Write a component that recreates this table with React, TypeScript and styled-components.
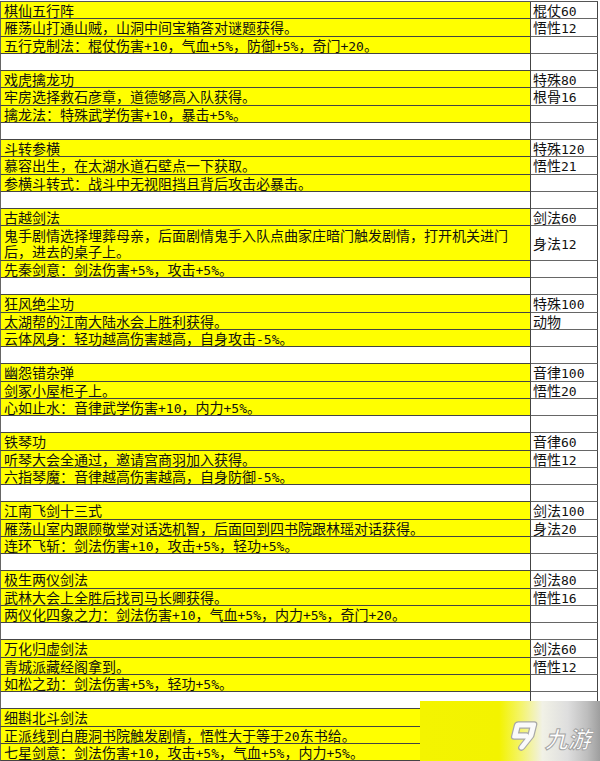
import * as React from 'react';
import styled, { createGlobalStyle } from 'styled-components';

const ROW = 17.25;

const GlobalStyle = createGlobalStyle`
  html, body {
    margin: 0;
    padding: 0;
    background: #fff;
  }
  body {
    font-family: "Noto Sans CJK SC", sans-serif;
  }
`;

const Page = styled.div`
  position: relative;
  width: 600px;
  height: 761px;
  overflow: hidden;
  box-sizing: border-box;
  padding-top: 1px;
  background: #fff;
`;

const Sheet = styled.div`
  width: 598px;
  border-top: 1px solid #555;
  display: flex;
  flex-direction: column;
`;

const Row = styled.div<{ $lines: number }>`
  display: grid;
  grid-template-columns: 531px 67px;
  height: ${(p) => p.$lines * ROW}px;
  flex: none;
`;

const Cell = styled.div`
  box-sizing: border-box;
  display: flex;
  flex-direction: column;
  justify-content: center;
  border-bottom: 1px solid #444;
  border-right: 1px solid #444;
  font-family: "Noto Sans CJK SC", sans-serif;
  font-size: 14px;
  line-height: 16px;
  color: #111;
  white-space: nowrap;
`;

const MainCell = styled(Cell)<{ $fill: boolean }>`
  background: ${(p) => (p.$fill ? '#ffff00' : '#fff')};
  border-left: 1px solid #666;
  padding-left: 3px;
`;

const ReqCell = styled(Cell)`
  background: #fff;
  border-bottom-color: #666;
  padding-left: 2px;
`;

const Line = styled.span`
  display: block;
  height: 16px;
  line-height: 16px;
`;

const Half = styled.span`
  font-family: "DejaVu Sans Mono", monospace;
  font-size: 13px;
  line-height: 16px;
`;

const Watermark = styled.div`
  position: absolute;
  left: 420px;
  top: 701px;
  width: 180px;
  height: 60px;
  display: flex;
  align-items: center;
  gap: 9px;
  box-sizing: border-box;
  padding: 8px 0 0 86px;
  background: linear-gradient(
    90deg,
    #f4f400 0%,
    #f3f300 44%,
    #f4f46a 56%,
    #f1f1e6 68%,
    #dedede 82%,
    #bdbdbd 93%,
    #9e9e9e 100%
  );
`;

const Logo = styled.svg`
  width: 32px;
  height: 32px;
  flex: none;
`;

const Brand = styled.span`
  display: inline-block;
  font-family: "Noto Sans CJK SC", sans-serif;
  font-size: 23px;
  font-weight: 700;
  line-height: 23px;
  color: #fff;
  -webkit-text-stroke: 1px #a4a4a4;
  transform: skewX(-14deg);
  margin-top: 6px;
`;

interface Skill {
  title: string;
  source: string[];
  effect: string;
  reqs: string[];
}

const skills: Skill[] = [
  {
    title: '棋仙五行阵',
    source: ['雁荡山打通山贼，山洞中间宝箱答对谜题获得。'],
    effect: '五行克制法：棍仗伤害+10，气血+5%，防御+5%，奇门+20。',
    reqs: ['棍仗60', '悟性12'],
  },
  {
    title: '戏虎擒龙功',
    source: ['牢房选择救石彦章，道德够高入队获得。'],
    effect: '擒龙法：特殊武学伤害+10，暴击+5%。',
    reqs: ['特殊80', '根骨16'],
  },
  {
    title: '斗转参横',
    source: ['慕容出生，在太湖水道石壁点一下获取。'],
    effect: '参横斗转式：战斗中无视阻挡且背后攻击必暴击。',
    reqs: ['特殊120', '悟性21'],
  },
  {
    title: '古越剑法',
    source: [
      '鬼手剧情选择埋葬母亲，后面剧情鬼手入队点曲家庄暗门触发剧情，打开机关进门',
      '后，进去的桌子上。',
    ],
    effect: '先秦剑意：剑法伤害+5%，攻击+5%。',
    reqs: ['剑法60', '身法12'],
  },
  {
    title: '狂风绝尘功',
    source: ['太湖帮的江南大陆水会上胜利获得。'],
    effect: '云体风身：轻功越高伤害越高，自身攻击-5%。',
    reqs: ['特殊100', '动物'],
  },
  {
    title: '幽怨错杂弹',
    source: ['剑冢小屋柜子上。'],
    effect: '心如止水：音律武学伤害+10，内力+5%。',
    reqs: ['音律100', '悟性20'],
  },
  {
    title: '铁琴功',
    source: ['听琴大会全通过，邀请宫商羽加入获得。'],
    effect: '六指琴魔：音律越高伤害越高，自身防御-5%。',
    reqs: ['音律60', '悟性12'],
  },
  {
    title: '江南飞剑十三式',
    source: ['雁荡山室内跟顾敬堂对话选机智，后面回到四书院跟林瑶对话获得。'],
    effect: '连环飞斩：剑法伤害+10，攻击+5%，轻功+5%。',
    reqs: ['剑法100', '身法20'],
  },
  {
    title: '极生两仪剑法',
    source: ['武林大会上全胜后找司马长卿获得。'],
    effect: '两仪化四象之力：剑法伤害+10，气血+5%，内力+5%，奇门+20。',
    reqs: ['剑法80', '悟性16'],
  },
  {
    title: '万化归虚剑法',
    source: ['青城派藏经阁拿到。'],
    effect: '如松之劲：剑法伤害+5%，轻功+5%。',
    reqs: ['剑法60', '悟性12'],
  },
  {
    title: '细斟北斗剑法',
    source: ['正派线到白鹿洞书院触发剧情，悟性大于等于20东书给。'],
    effect: '七星剑意：剑法伤害+10，攻击+5%，气血+5%，内力+5%。',
    reqs: ['', ''],
  },
];

// half-width runs (digits, +, %) are narrower than the CJK glyphs
function Mixed({ text }: { text: string }) {
  const parts = text.split(/([\x20-\x7e]+)/);
  return (
    <>
      {parts.map((p, i) => (i % 2 ? <Half key={i}>{p}</Half> : p))}
    </>
  );
}

function SkillBlock({ skill, last }: { skill: Skill; last: boolean }) {
  return (
    <>
      <Row $lines={1}>
        <MainCell $fill>
          <Line><Mixed text={skill.title} /></Line>
        </MainCell>
        <ReqCell>{skill.reqs[0] && <Line><Mixed text={skill.reqs[0]} /></Line>}</ReqCell>
      </Row>
      <Row $lines={skill.source.length}>
        <MainCell $fill>
          {skill.source.map((line, i) => (
            <Line key={i}><Mixed text={line} /></Line>
          ))}
        </MainCell>
        <ReqCell>{skill.reqs[1] && <Line><Mixed text={skill.reqs[1]} /></Line>}</ReqCell>
      </Row>
      <Row $lines={1}>
        <MainCell $fill>
          <Line><Mixed text={skill.effect} /></Line>
        </MainCell>
        <ReqCell />
      </Row>
      {!last && (
        <Row $lines={1}>
          <MainCell $fill={false} />
          <ReqCell />
        </Row>
      )}
    </>
  );
}

export default function App() {
  return (
    <Page>
      <GlobalStyle />
      <Sheet>
        {skills.map((s, i) => (
          <SkillBlock key={s.title} skill={s} last={i === skills.length - 1} />
        ))}
      </Sheet>
      <Watermark>
        <Logo viewBox="0 0 32 32">
          <g transform="translate(7 0) skewX(-14)" fill="none" strokeLinecap="round" strokeLinejoin="round">
            <path d="M17 17 H6 V6 H22 V17 L16 28" stroke="#a8a8a8" strokeWidth="7.5" />
            <path d="M17 17 H6 V6 H22 V17 L16 28" stroke="#fafafa" strokeWidth="5" />
          </g>
        </Logo>
        <Brand>九游</Brand>
      </Watermark>
    </Page>
  );
}
